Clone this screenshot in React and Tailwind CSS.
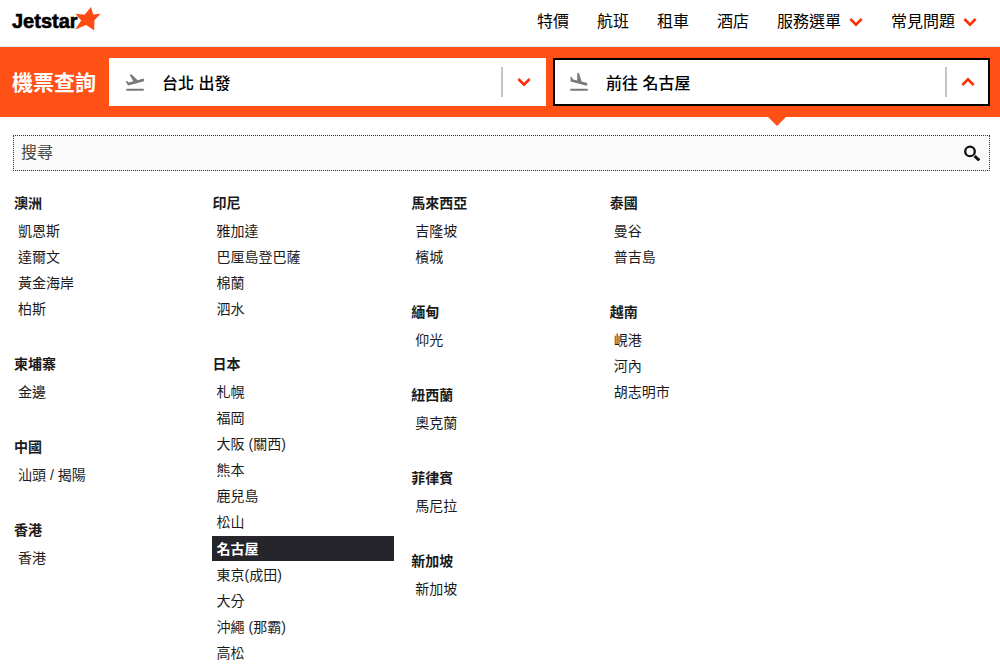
import { useState } from "react";

const navLinks = [
  { label: "特價" },
  { label: "航班" },
  { label: "租車" },
  { label: "酒店" },
  { label: "服務選單", menu: true },
  { label: "常見問題", menu: true },
];

const columns = [
  [
    { country: "澳洲", cities: ["凱恩斯", "達爾文", "黃金海岸", "柏斯"] },
    { country: "柬埔寨", cities: ["金邊"] },
    { country: "中國", cities: ["汕頭 / 揭陽"] },
    { country: "香港", cities: ["香港"] },
  ],
  [
    { country: "印尼", cities: ["雅加達", "巴厘島登巴薩", "棉蘭", "泗水"] },
    {
      country: "日本",
      cities: [
        "札幌",
        "福岡",
        "大阪 (關西)",
        "熊本",
        "鹿兒島",
        "松山",
        "名古屋",
        "東京(成田)",
        "大分",
        "沖繩 (那霸)",
        "高松",
      ],
    },
  ],
  [
    { country: "馬來西亞", cities: ["吉隆坡", "檳城"] },
    { country: "緬甸", cities: ["仰光"] },
    { country: "紐西蘭", cities: ["奧克蘭"] },
    { country: "菲律賓", cities: ["馬尼拉"] },
    { country: "新加坡", cities: ["新加坡"] },
  ],
  [
    { country: "泰國", cities: ["曼谷", "普吉島"] },
    { country: "越南", cities: ["峴港", "河內", "胡志明市"] },
  ],
];

function Chevron({ up }) {
  return (
    <svg
      viewBox="0 0 14 10"
      className={up ? "h-[10px] w-[14px] rotate-180" : "h-[10px] w-[14px]"}
      fill="none"
      stroke="#ff2e0a"
      strokeWidth="2.6"
      aria-hidden="true"
    >
      <path d="M1.4 2 7 7.6 12.6 2" />
    </svg>
  );
}

function TakeoffIcon() {
  return (
    <svg viewBox="0 0 24 24" className="h-[22px] w-[22px]" fill="#77797c" aria-hidden="true">
      <path d="M2.5 19.4h19v2.2h-19zM22.07 9.64c-.21-.8-1.04-1.28-1.84-1.06L14.92 10l-6.9-6.43-1.93.51 4.14 7.17-4.97 1.33-1.97-1.54-1.45.39 2.59 4.49L21 11.49c.81-.23 1.28-1.05 1.07-1.85z" />
    </svg>
  );
}

function LandingIcon() {
  return (
    <svg viewBox="0 0 24 24" className="h-[22px] w-[22px]" fill="#77797c" aria-hidden="true">
      <path d="M2.5 19.4h19v2.2h-19zM19.34 15.85c.8.21 1.62-.26 1.84-1.06.21-.8-.26-1.62-1.06-1.84l-5.31-1.42-2.76-9.02L10.12 2v8.28L5.15 8.95l-.93-2.32-1.45-.39v5.17l16.57 4.44z" />
    </svg>
  );
}

function AirportField({ id, label, value, icon, open, onToggle }) {
  return (
    <div
      className={
        open
          ? "relative flex h-12 min-w-0 flex-1 items-center border-2 border-black bg-white pl-[13px]"
          : "relative flex h-12 min-w-0 flex-1 items-center border-2 border-white bg-white pl-[13px]"
      }
    >
      <label htmlFor={id} className="shrink-0">
        {icon}
      </label>
      <input
        id={id}
        type="text"
        readOnly
        aria-label={label}
        value={value}
        className="ml-4 h-8 min-w-0 flex-1 bg-transparent text-base leading-7 font-medium text-black outline-none"
      />
      <button
        type="button"
        aria-label={label}
        aria-expanded={open}
        onClick={onToggle}
        className="flex h-[30px] w-[43px] items-center justify-center border-l-2 border-[#c4c4c4]"
      >
        <Chevron up={open} />
      </button>
      {open && (
        <svg
          viewBox="0 0 18 9"
          className="absolute top-[57px] left-1/2 h-[9px] w-[18px] -translate-x-1"
          fill="#ff5115"
          aria-hidden="true"
        >
          <path d="M0 0h18L9 9z" />
        </svg>
      )}
    </div>
  );
}

export default function App() {
  const [destination, setDestination] = useState("名古屋");
  const [openField, setOpenField] = useState("to");
  const [query, setQuery] = useState("");

  const toggle = (field) => setOpenField(openField === field ? null : field);

  return (
    <div className="bg-white font-['Liberation_Sans','Noto_Sans_CJK_TC',sans-serif] text-[#1b1b1b]">
      <header className="flex h-[47px] items-center justify-between border-b border-[#d8ecf8] pr-[23px] pl-3">
        <a href="#home" aria-label="Jetstar" className="flex items-start pb-1">
          <span className="text-xl leading-7 font-bold text-black [-webkit-text-stroke:0.6px_black]">
            Jetstar
          </span>
          <svg viewBox="0 0 26 24" className="-ml-[3px] h-6 w-[26px]" fill="#ff4a12" aria-hidden="true">
            <path d="M16 0 18.2 7.4 25.6 6.8 19.4 13.2 19.2 23.4 11.2 18 0 22.6 6.2 13.4 .4 6.8 9.6 7.8Z" />
          </svg>
        </a>
        <nav className="flex items-center gap-7 pb-[2px]">
          {navLinks.map((link) =>
            link.menu ? (
              <button key={link.label} type="button" className="flex items-center gap-2 text-base text-black">
                {link.label}
                <Chevron />
              </button>
            ) : (
              <a key={link.label} href="#" className="text-base text-black">
                {link.label}
              </a>
            ),
          )}
        </nav>
      </header>

      {/* Flight search */}
      <section className="flex h-[70px] items-center gap-[7px] bg-[#ff5115] pr-[10px] pl-3">
        <h1 className="mr-[6px] pt-[2px] text-[21px] leading-7 font-bold whitespace-nowrap text-white">
          機票查詢
        </h1>
        <AirportField
          id="from"
          label="出發地"
          value="台北 出發"
          icon={<TakeoffIcon />}
          open={openField === "from"}
          onToggle={() => toggle("from")}
        />
        <AirportField
          id="to"
          label="目的地"
          value={`前往 ${destination}`}
          icon={<LandingIcon />}
          open={openField === "to"}
          onToggle={() => toggle("to")}
        />
      </section>

      {/* Destination list */}
      <main className="pt-[18px] pr-[10px] pl-[13px]">
        <div className="flex h-9 items-center border border-dotted border-[#333] bg-[#fafafa] pr-[9px] pl-[7px]">
          <input
            id="search"
            type="text"
            aria-label="搜尋"
            placeholder="搜尋"
            value={query}
            onChange={(e) => setQuery(e.target.value)}
            className="h-8 min-w-0 flex-1 bg-transparent text-base leading-7 outline-none placeholder:text-[#444]"
          />
          <label htmlFor="search">
            <svg viewBox="0 0 16 16" className="h-4 w-4" fill="none" stroke="#111" aria-hidden="true">
              <circle cx="6" cy="6.4" r="4.8" strokeWidth="2.3" />
              <path d="M10.6 11 15.2 15.4" strokeWidth="3" />
            </svg>
          </label>
        </div>

        <div className="mt-[17px] grid grid-cols-5 gap-4">
          {columns.map((groups, index) => (
            <div key={index} className="flex flex-col gap-[27px]">
              {groups.map((group) => (
                <section key={group.country}>
                  <h2 className="h-[30px] pl-px text-sm leading-[30px] font-bold">{group.country}</h2>
                  <ul>
                    {group.cities
                      .filter((city) => city.includes(query))
                      .map((city) => (
                        <li key={city}>
                          <button
                            type="button"
                            onClick={() => setDestination(city)}
                            className={
                              city === destination
                                ? "my-px block h-[25px] w-full bg-[#26252b] pl-[5px] text-left text-sm font-bold text-white"
                                : "block h-[26px] w-full pl-[5px] text-left text-sm"
                            }
                          >
                            {city}
                          </button>
                        </li>
                      ))}
                  </ul>
                </section>
              ))}
            </div>
          ))}
        </div>
      </main>
    </div>
  );
}
